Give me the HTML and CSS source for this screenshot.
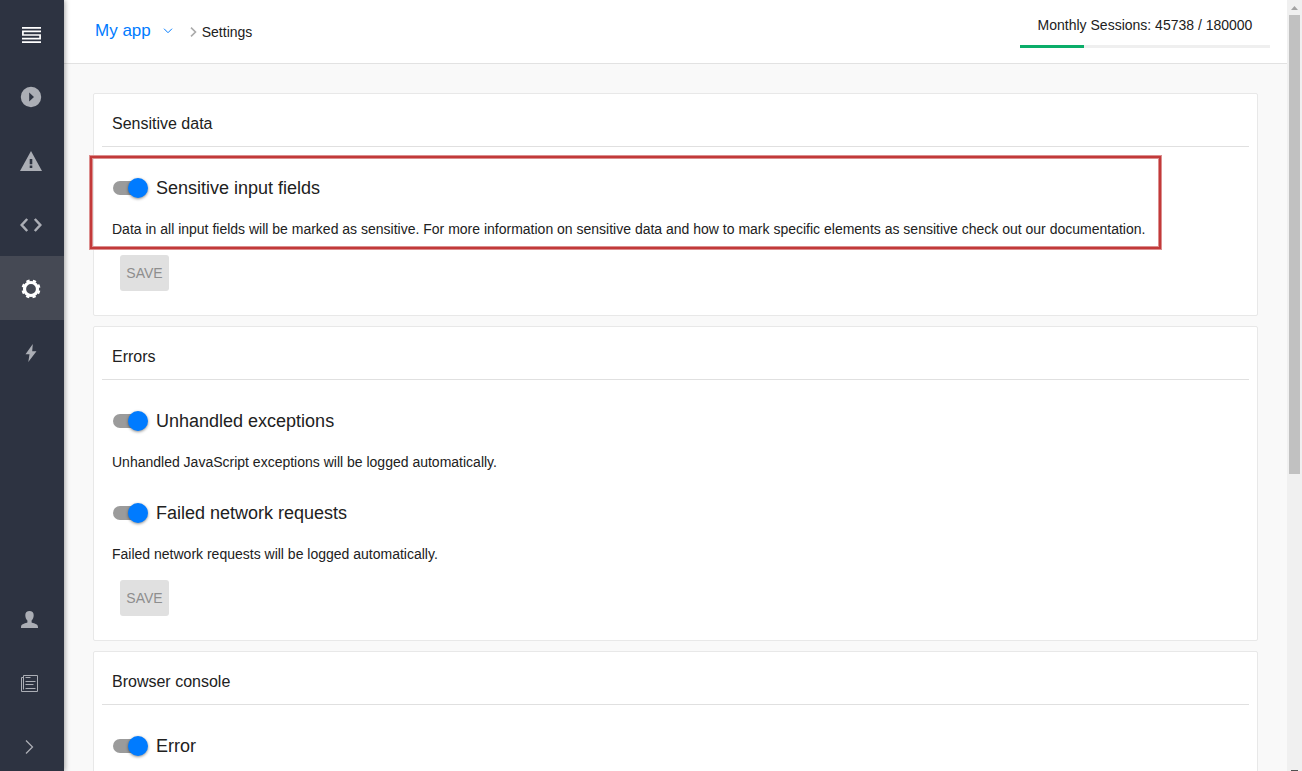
FILE: index.html
```html
<!DOCTYPE html>
<html lang="en">
<head>
<meta charset="utf-8">
<title>Settings</title>
<link rel="stylesheet" href="styles.css">
</head>
<body>
<nav class="sidebar" aria-label="Main">
  <a class="nav-item nav-logo" href="#" aria-label="Home">
    <svg width="19" height="16" viewBox="0 0 19 16" fill="none" stroke="#fff" stroke-width="1.700"><path d="M0 .9H19M19 4.300H.9V8H18.100V11.700H0M0 15.100H19"/></svg>
  </a>
  <a class="nav-item" href="#" aria-label="Sessions">
    <svg width="22" height="22" viewBox="0 0 22 22"><path fill="currentColor" fill-rule="evenodd" d="M11 .8a10.2 10.2 0 1 0 0 20.4 10.2 10.2 0 0 0 0-20.4zM9.2 6.5 14 11l-4.800 4.500z"/></svg>
  </a>
  <a class="nav-item" href="#" aria-label="Errors">
    <svg width="22" height="20" viewBox="0 0 22 20"><path fill="currentColor" fill-rule="evenodd" d="M11 0 22 20H0zM9.700 8v5.200h2.600V8zM9.700 14.600v2.400h2.600v-2.400z"/></svg>
  </a>
  <a class="nav-item" href="#" aria-label="Code">
    <svg width="22" height="14" viewBox="0 0 22 14" fill="none" stroke="currentColor" stroke-width="2.500"><path d="M7.200 1 1.700 7l5.500 6M14.800 1l5.500 6-5.500 6"/></svg>
  </a>
  <a class="nav-item nav-item-active" href="#" aria-label="Settings" aria-current="page">
    <svg width="20" height="20" viewBox="0 0 20 20"><g fill="none" stroke="currentColor"><circle cx="10" cy="10" r="6.500" stroke-width="3.200"/><path stroke-width="2.600" stroke-dasharray="3.200 3.240" stroke-dashoffset="-1.620" d="M18.200 10A8.200 8.200 0 1 1 1.800 10 8.200 8.200 0 1 1 18.200 10"/></g></svg>
  </a>
  <a class="nav-item" href="#" aria-label="Integrations">
    <svg width="12" height="18" viewBox="0 0 12 18"><path fill="currentColor" d="M7.800 0 .5 10.200h4L3.300 18 11.500 7.300H7.200z"/></svg>
  </a>
  <span class="nav-space"></span>
  <a class="nav-item nav-item-low" href="#" aria-label="Account">
    <svg width="17" height="17" viewBox="0 0 17 17"><path fill="currentColor" d="M8.500 0C6 0 4.300 1.500 4.300 4c0 2.500.8 4.400 2.100 5.600v2C5.500 12.500 0 12.500 0 16v1h17v-1c0-3.500-5.500-3.500-6.400-4.400v-2c1.300-1.200 2.100-3.100 2.100-5.600 0-2.500-1.700-4-4.200-4z"/></svg>
  </a>
  <a class="nav-item nav-item-low" href="#" aria-label="Documentation">
    <svg width="17" height="17" viewBox="0 0 17 17" fill="none" stroke="currentColor"><path d="M2.500 14.500V.5h14v16H.5v-14h2M4.500 2.500h5M4.500 6.500h10M4.500 9.500h8M4.500 13.500h10"/></svg>
  </a>
  <a class="nav-item nav-item-low" href="#" aria-label="Expand">
    <svg width="9" height="14" viewBox="0 0 9 14" fill="none" stroke="currentColor" stroke-width="1.300"><path d="M1 .5 7.500 7 1 13.500"/></svg>
  </a>
</nav>
<div class="page">
  <header class="topbar">
    <div class="crumbs">
      <button class="app-menu" type="button">My app
        <svg width="10" height="6" viewBox="0 0 10 6" fill="none" stroke="currentColor"><path d="M1 .7 5 4.700 9 .7"/></svg>
      </button>
      <svg class="crumb-arrow" width="7" height="10" viewBox="0 0 7 10" fill="none" stroke="#aaa" stroke-width="1.600"><path d="M1 .6 5.500 5 1 9.400"/></svg>
      <span class="crumb">Settings</span>
    </div>
    <div class="quota">
      <label class="quota-label" for="quota">Monthly Sessions: 45738 / 180000</label>
      <progress class="quota-bar" id="quota" value="45738" max="180000"></progress>
    </div>
  </header>
  <main class="content">
    <section class="card">
      <h2 class="card-title">Sensitive data</h2>
      <div class="setting setting-marked">
        <label class="toggle"><input class="switch" type="checkbox" checked>Sensitive input fields</label>
        <p class="hint">Data in all input fields will be marked as sensitive. For more information on sensitive data and how to mark specific elements as sensitive check out our documentation.</p>
      </div>
      <button class="save" type="button" disabled>SAVE</button>
    </section>
    <section class="card">
      <h2 class="card-title">Errors</h2>
      <div class="setting">
        <label class="toggle"><input class="switch" type="checkbox" checked>Unhandled exceptions</label>
        <p class="hint">Unhandled JavaScript exceptions will be logged automatically.</p>
      </div>
      <div class="setting">
        <label class="toggle"><input class="switch" type="checkbox" checked>Failed network requests</label>
        <p class="hint">Failed network requests will be logged automatically.</p>
      </div>
      <button class="save" type="button" disabled>SAVE</button>
    </section>
    <section class="card">
      <h2 class="card-title">Browser console</h2>
      <div class="setting">
        <label class="toggle"><input class="switch" type="checkbox" checked>Error</label>
      </div>
    </section>
  </main>
</div>
<div class="scrollbar" aria-hidden="true">
  <svg width="7" height="4" viewBox="0 0 7 4"><path fill="#a3a3a3" d="M3.500 0 7 4H0z"/></svg>
  <div class="scroll-thumb"></div>
  <div class="scroll-end"></div>
</div>
</body>
</html>
```
FILE: styles.css
```css
* { box-sizing: border-box; }

body {
  margin: 0;
  display: flex;
  height: 100vh;
  overflow: hidden;
  background: #f9f9f9;
  color: #212121;
  font-family: "Liberation Sans", Arial, sans-serif;
  font-size: 14px;
}

.sidebar {
  display: flex;
  flex-direction: column;
  flex: none;
  width: 64px;
  background: #2d3341;
  box-shadow: 1px 0 5px rgba(0, 0, 0, .35);
  z-index: 1;
}
.nav-item {
  display: flex;
  align-items: center;
  justify-content: center;
  flex: none;
  height: 64px;
  padding-top: 2px;
  padding-right: 2px;
  color: #abaeb5;
}
.nav-logo { padding-top: 6px; padding-right: 1px; }
.nav-item-active { padding-right: 3px; background: #454954; color: #fff; }
.nav-item-low { padding-right: 5px; padding-top: 16px; }
.nav-space { flex: 1; }

.page { flex: 1; min-width: 0; overflow: hidden; }

.topbar {
  display: flex;
  justify-content: space-between;
  height: 64px;
  padding: 0 17px 0 31px;
  background: #fff;
  border-bottom: 1px solid #e2e2e2;
}
.crumbs { display: flex; align-items: center; }
.app-menu {
  display: flex;
  align-items: center;
  gap: 12px;
  padding: 0 0 2px;
  border: 0;
  background: none;
  color: #007bff;
  font: 17px/20px "Liberation Sans", Arial, sans-serif;
}
.crumb-arrow { margin: 0 5px 0 17px; }
.crumb { line-height: 20px; }
.quota {
  display: flex;
  flex-direction: column;
  align-items: center;
  gap: 10px;
  width: 250px;
  padding-top: 15px;
}
.quota-label { line-height: 20px; }
.quota-bar {
  appearance: none;
  width: 100%;
  height: 3px;
  border: 0;
  background: #efefef;
}
.quota-bar::-webkit-progress-bar { background: #efefef; }
.quota-bar::-webkit-progress-value { background: #0bad69; }

.content {
  display: flex;
  flex-direction: column;
  gap: 10px;
  padding: 29px;
}
.card {
  padding: 8px 8px 24px;
  background: #fff;
  border: 1px solid #e8e8e8;
  border-radius: 2px;
}
.card-title {
  margin: 0;
  padding: 0 10px;
  border-bottom: 1px solid #e0e0e0;
  font-size: 16px;
  font-weight: 400;
  line-height: 44px;
}
.setting { padding: 29px 10px 0; }
.setting-marked { position: relative; width: fit-content; }
.setting-marked::after {
  content: "";
  position: absolute;
  inset: 9px -6px -10px -12px;
  border: 2px solid #c23a3a;
  box-shadow: 0 0 0 1px #dc8f8f, inset 0 0 0 1px #dc8f8f;
  pointer-events: none;
}
.toggle {
  display: flex;
  align-items: center;
  gap: 8px;
  height: 24px;
  font-size: 18px;
}
.switch {
  appearance: none;
  position: relative;
  width: 35px;
  height: 20px;
  margin: 0 0 0 1px;
}
.switch::before {
  content: "";
  position: absolute;
  inset: 3px 1px 3px 0;
  border-radius: 7px;
  background: #9b9b9b;
}
.switch::after {
  content: "";
  position: absolute;
  right: 0;
  width: 20px;
  height: 20px;
  border-radius: 50%;
  background: #007bff;
  box-shadow: 0 1px 3px rgba(0, 0, 0, .45);
}
.hint { margin: 19px 0 0; line-height: 20px; }
.save {
  display: block;
  min-width: 49px;
  height: 36px;
  margin: 16px 0 0 18px;
  padding: 0 6px;
  border: 0;
  border-radius: 3px;
  background: #e0e0e0;
  color: #8e8e8e;
  font: 14px "Liberation Sans", Arial, sans-serif;
}

.scrollbar {
  display: flex;
  flex-direction: column;
  align-items: center;
  flex: none;
  width: 15px;
  padding: 6px 0 0;
  background: #f0f0f0;
}
.scrollbar svg { flex: none; }
.scroll-thumb {
  width: 11px;
  height: 60%;
  margin-top: 5px;
  background: #c1c1c1;
}
.scroll-end {
  width: 7px;
  height: 1px;
  margin-top: auto;
  background: #505050;
}
```
